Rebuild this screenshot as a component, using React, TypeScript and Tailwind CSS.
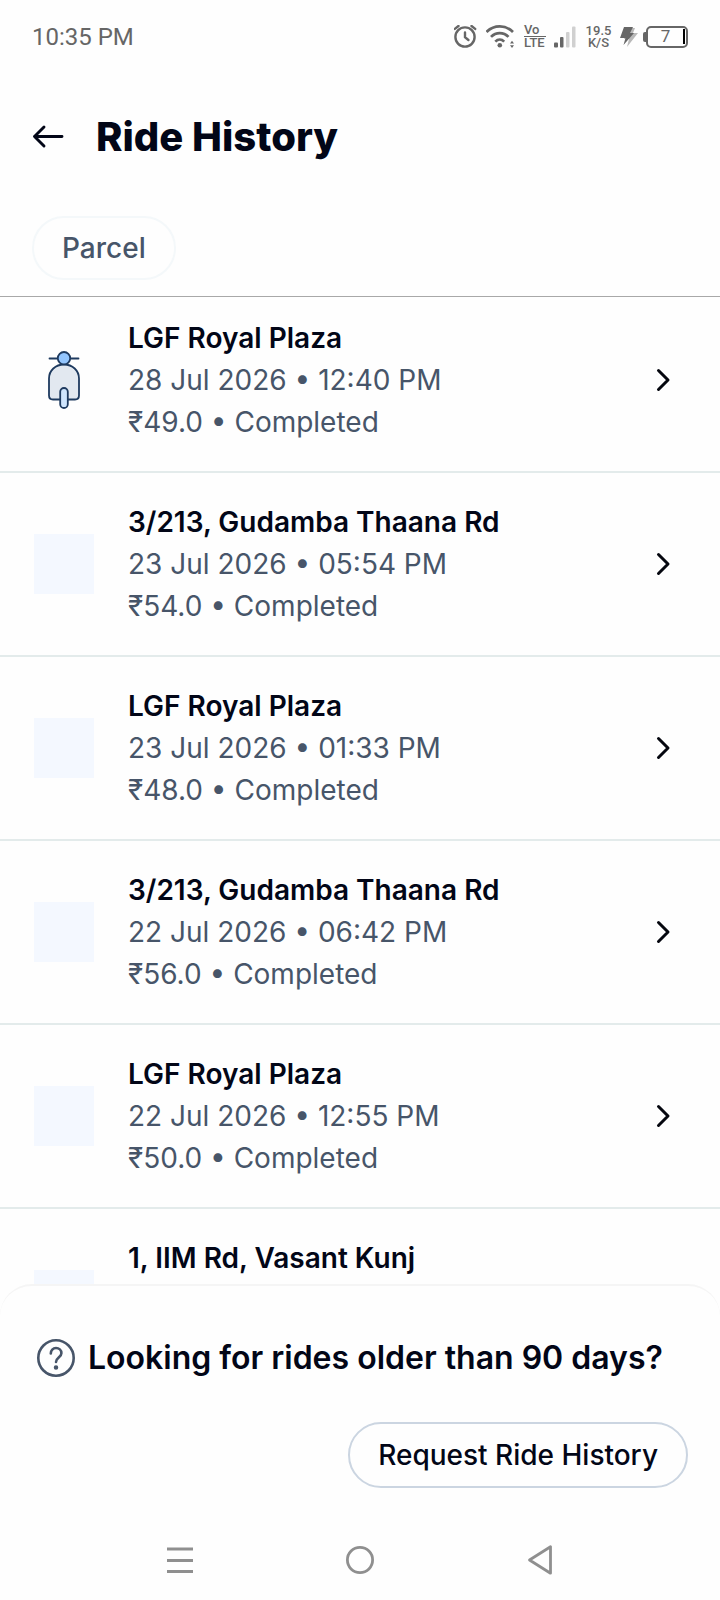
import { useState } from 'react';

type Ride = {
  id: number;
  place: string;
  trip?: { date: string; time: string; fare: string; status: string };
  thumb: 'scooter' | 'blank';
};

const rides: Ride[] = [
  { id: 1, place: 'LGF Royal Plaza', trip: { date: '28 Jul 2026', time: '12:40 PM', fare: '₹49.0', status: 'Completed' }, thumb: 'scooter' },
  { id: 2, place: '3/213, Gudamba Thaana Rd', trip: { date: '23 Jul 2026', time: '05:54 PM', fare: '₹54.0', status: 'Completed' }, thumb: 'blank' },
  { id: 3, place: 'LGF Royal Plaza', trip: { date: '23 Jul 2026', time: '01:33 PM', fare: '₹48.0', status: 'Completed' }, thumb: 'blank' },
  { id: 4, place: '3/213, Gudamba Thaana Rd', trip: { date: '22 Jul 2026', time: '06:42 PM', fare: '₹56.0', status: 'Completed' }, thumb: 'blank' },
  { id: 5, place: 'LGF Royal Plaza', trip: { date: '22 Jul 2026', time: '12:55 PM', fare: '₹50.0', status: 'Completed' }, thumb: 'blank' },
  { id: 6, place: '1, IIM Rd, Vasant Kunj', thumb: 'blank' },
];

function StatusBar() {
  return (
    <div className="flex h-[73px] shrink-0 items-center justify-between px-8 font-['Roboto',sans-serif] text-[#666666]">
      <span className="text-2xl">10:35 PM</span>
      <div className="flex items-center gap-2">
        <svg className="h-6 w-6" viewBox="0 0 24 24" fill="none" stroke="currentColor" strokeWidth="2.4" strokeLinecap="round">
          <circle cx="11" cy="12" r="9.6" />
          <path d="M11 7.500v4.700l3.400 2.800M.8 3.900 4.500 1M21.200 3.900 17.500 1" />
        </svg>
        <svg className="h-6 w-[30px]" viewBox="0 0 30 24" fill="none" stroke="currentColor" strokeWidth="2.700">
          <path d="M.5 7C8 -.4 19.500-.4 27 7M5 11.900c5-5 12.500-5 17.500 0M9.300 16.600c2.700-2.700 6.200-2.700 8.900 0" />
          <circle cx="13.800" cy="20.300" r="2.300" fill="currentColor" stroke="none" />
          <path d="m24 18.500 2-2.800 2 2.800zM24 20.300l2 2.800 2-2.800z" fill="currentColor" stroke="none" />
        </svg>
        <span className="flex w-[22px] flex-col text-[13px] leading-[12px] font-medium">
          <span className="border-b border-current">Vo</span>
          <span>LTE</span>
        </span>
        <svg className="h-6 w-6" viewBox="0 0 24 24" fill="currentColor">
          <rect x="0" y="17.500" width="4" height="5" rx="1" />
          <rect x="6" y="12" width="3.500" height="10.500" rx="1" />
          <rect x="12" y="7" width="3.500" height="15.500" rx="1" opacity=".3" />
          <rect x="18" y="1.500" width="3.500" height="21" rx="1" opacity=".3" />
        </svg>
        <span className="flex w-[25px] flex-col items-center text-[13px] leading-[12px] font-medium">
          <span>19.5</span>
          <span>K/S</span>
        </span>
        <div className="flex items-center gap-1">
          <svg className="h-6 w-5" viewBox="0 0 20 24" fill="currentColor">
            <path d="M9 3h7l-2 5h5L8 22l2-8H5z" opacity=".45" />
            <path d="M5 2h9l-3 6h4L4.500 20l2-7H1z" />
          </svg>
          <div className="flex items-center">
            <span className="h-[10px] w-[3px] rounded-l-[2px] bg-current" />
            <span className="flex h-[22px] w-[42px] items-center rounded-[5px] border-2 border-current pr-px">
              <span className="flex-1 text-center text-[17px] leading-none">7</span>
              <span className="h-[15px] w-0.5 bg-black" />
            </span>
          </div>
        </div>
      </div>
    </div>
  );
}

function Scooter() {
  return (
    <svg className="h-16 w-16" viewBox="0 0 64 64" fill="none" stroke="#1e3a5f" strokeWidth="1.800" strokeLinecap="round">
      <path d="M17 40.500V30.500C17 22.500 23.500 16.500 32 16.500S47 22.500 47 30.500V47.500c0 2.500-1.500 4-4 4H21c-2.500 0-4-1.500-4-4z" fill="#e2e8f0" />
      <path d="M17.500 10.500h29" />
      <circle cx="32" cy="10.200" r="6.200" fill="#93c5fd" />
      <rect x="28.200" y="40" width="7.600" height="20" rx="3.800" fill="#cfe5fd" />
    </svg>
  );
}

function RideRow({ ride }: { ride: Ride }) {
  const { place, trip, thumb } = ride;

  return (
    <li className="border-b-2 border-[#e3ebeb] first:-mt-2">
      <button className="flex w-full items-center px-8 py-7 text-left">
        <span className="mr-8 flex h-16 w-16 shrink-0 items-center justify-center">
          {thumb === 'scooter' ? <Scooter /> : <span className="h-[60px] w-[60px] bg-[#f4f8ff]" />}
        </span>
        <span className="flex min-h-[126px] min-w-0 flex-1 flex-col text-[28px] leading-[42px] text-[#475569]">
          <span className="truncate font-semibold text-[#020617]">{place}</span>
          {trip && (
            <>
              <span>{trip.date} • {trip.time}</span>
              <span>{trip.fare} • {trip.status}</span>
            </>
          )}
        </span>
        <svg className="h-12 w-12 shrink-0" viewBox="0 0 48 48" fill="none" stroke="#05070f" strokeWidth="3" strokeLinecap="round" strokeLinejoin="round">
          <path d="m18.500 14.500 9.500 9.500-9.500 9.500" />
        </svg>
      </button>
    </li>
  );
}

function NavBar() {
  return (
    <nav className="flex h-20 items-center justify-center gap-[140px] text-[#8f8f8f]">
      <button aria-label="Recent apps">
        <svg className="h-10 w-10" viewBox="0 0 40 40" fill="none" stroke="currentColor" strokeWidth="3">
          <path d="M7 9h26M7 20.500h26M7 31.500h26" />
        </svg>
      </button>
      <button aria-label="Home">
        <svg className="h-10 w-10" viewBox="0 0 40 40" fill="none" stroke="currentColor" strokeWidth="2.800">
          <circle cx="20" cy="20" r="12.600" />
        </svg>
      </button>
      <button aria-label="Back">
        <svg className="h-10 w-10" viewBox="0 0 40 40" fill="none" stroke="currentColor" strokeWidth="2.800" strokeLinejoin="round">
          <path d="M9.500 20 30.500 6.800v26.400z" />
        </svg>
      </button>
    </nav>
  );
}

export default function App() {
  const [parcelOnly, setParcelOnly] = useState(false);

  return (
    <div className="flex h-screen flex-col overflow-hidden bg-[#fefefe] font-['Inter',sans-serif] text-[#020617]">
      <StatusBar />

      <header className="shrink-0 border-b border-[#a8a8a8] px-8 pb-4">
        <div className="flex h-[127px] items-center gap-8">
          <button aria-label="Go back">
            <svg className="h-8 w-8" viewBox="0 0 32 32" fill="none" stroke="currentColor" strokeWidth="2.900" strokeLinecap="round" strokeLinejoin="round">
              <path d="M30 15.500H2.500M12 6 2.500 15.500 12 25" />
            </svg>
          </button>
          <h1 className="text-[40px] font-extrabold">Ride History</h1>
        </div>
        <div className="mt-4 flex">
          <button
            aria-pressed={parcelOnly}
            onClick={() => setParcelOnly(!parcelOnly)}
            className="h-16 rounded-full border-2 border-[#f4f8fa] px-7 text-[28px] font-medium text-[#475569]"
          >
            Parcel
          </button>
        </div>
      </header>

      <ul className="min-h-0 flex-1 overflow-hidden">
        {rides.map((ride) => (
          <RideRow key={ride.id} ride={ride} />
        ))}
      </ul>

      <section className="relative -mt-8 shrink-0 rounded-t-[32px] border-t-2 border-[#f5f5f5] bg-[#fefefe]">
        <div className="px-8 pt-12 pb-8">
          <div className="flex items-center gap-2">
            <svg className="h-12 w-12 shrink-0" viewBox="0 0 48 48" fill="none" stroke="#475569" strokeWidth="2.600" strokeLinecap="round" strokeLinejoin="round">
              <circle cx="24" cy="24" r="17.700" />
              <path d="M18.800 19.500c0-3.200 2.200-5.500 5.200-5.500s5.400 2.200 5.400 5.200c0 4.200-5.400 4.600-5.400 8.800" />
              <circle cx="24" cy="33.500" r="1.500" fill="#475569" strokeWidth="1.500" />
            </svg>
            <h2 className="text-[32px] leading-[48px] font-semibold">Looking for rides older than 90 days?</h2>
          </div>
          <div className="mt-10 flex justify-end">
            <button className="h-[66px] rounded-full border-2 border-[#cbd5e1] px-7 text-[28px] font-medium">
              Request Ride History
            </button>
          </div>
        </div>
        <NavBar />
      </section>
    </div>
  );
}
